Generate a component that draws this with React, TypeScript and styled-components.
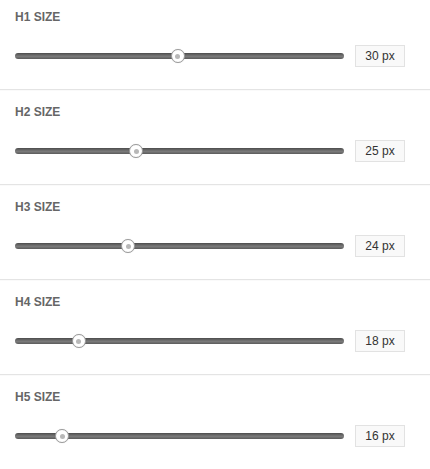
import React from "react";
import styled, { createGlobalStyle } from "styled-components";

const Global = createGlobalStyle`
  html, body { margin: 0; padding: 0; background: #fff; }
  body { font-family: "Liberation Sans", Arial, sans-serif; }
`;

const Panel = styled.div`
  width: 430px;
  display: flex;
  flex-direction: column;
`;

const Section = styled.div`
  display: flex;
  flex-direction: column;
  padding: 15px 25px 22px 15px;
  border-bottom: 1px solid #e4e4e4;
  box-shadow: 0 1px 0 #fafafa;
  &:first-child { padding-top: 10px; }
  &:last-child { border-bottom: none; box-shadow: none; }
`;

const Label = styled.div`
  font-size: 12px;
  line-height: 14px;
  font-weight: bold;
  color: #666;
`;

const Row = styled.div`
  display: flex;
  align-items: center;
  gap: 11px;
  margin-top: 21px;
`;

const Track = styled.div`
  position: relative;
  flex: 1;
  height: 6px;
  border-radius: 3px;
  background: linear-gradient(to bottom, #4c4c4c 0%, #6e6e6e 40%, #7a7a7a 60%, #5a5a5a 100%);
`;

const Thumb = styled.div`
  position: absolute;
  top: 50%;
  width: 12px;
  height: 12px;
  margin-left: -9px;
  margin-top: -7px;
  border-radius: 50%;
  background: #fff;
  border: 1px solid #9a9a9a;
  box-shadow: 0 0 1px rgba(0,0,0,0.2);
  display: flex;
  align-items: center;
  justify-content: center;
  &::after {
    content: "";
    width: 5px;
    height: 5px;
    border-radius: 50%;
    background: #b8b8b8;
  }
`;

const ValueBox = styled.div`
  width: 48px;
  height: 20px;
  border: 1px solid #e2e2e2;
  background: #f9f9f9;
  display: flex;
  align-items: center;
  justify-content: center;
  font-size: 12px;
  color: #333;
`;

const MIN = 10;
const MAX = 50;

const items = [
  { label: "H1 SIZE", value: 30 },
  { label: "H2 SIZE", value: 25 },
  { label: "H3 SIZE", value: 24 },
  { label: "H4 SIZE", value: 18 },
  { label: "H5 SIZE", value: 16 },
];

export default function App() {
  return (
    <>
      <Global />
      <Panel>
        {items.map((it) => (
          <Section key={it.label}>
            <Label>{it.label}</Label>
            <Row>
              <Track>
                <Thumb style={{ left: `${((it.value - MIN) / (MAX - MIN)) * 100}%` }} />
              </Track>
              <ValueBox>{it.value} px</ValueBox>
            </Row>
          </Section>
        ))}
      </Panel>
    </>
  );
}
